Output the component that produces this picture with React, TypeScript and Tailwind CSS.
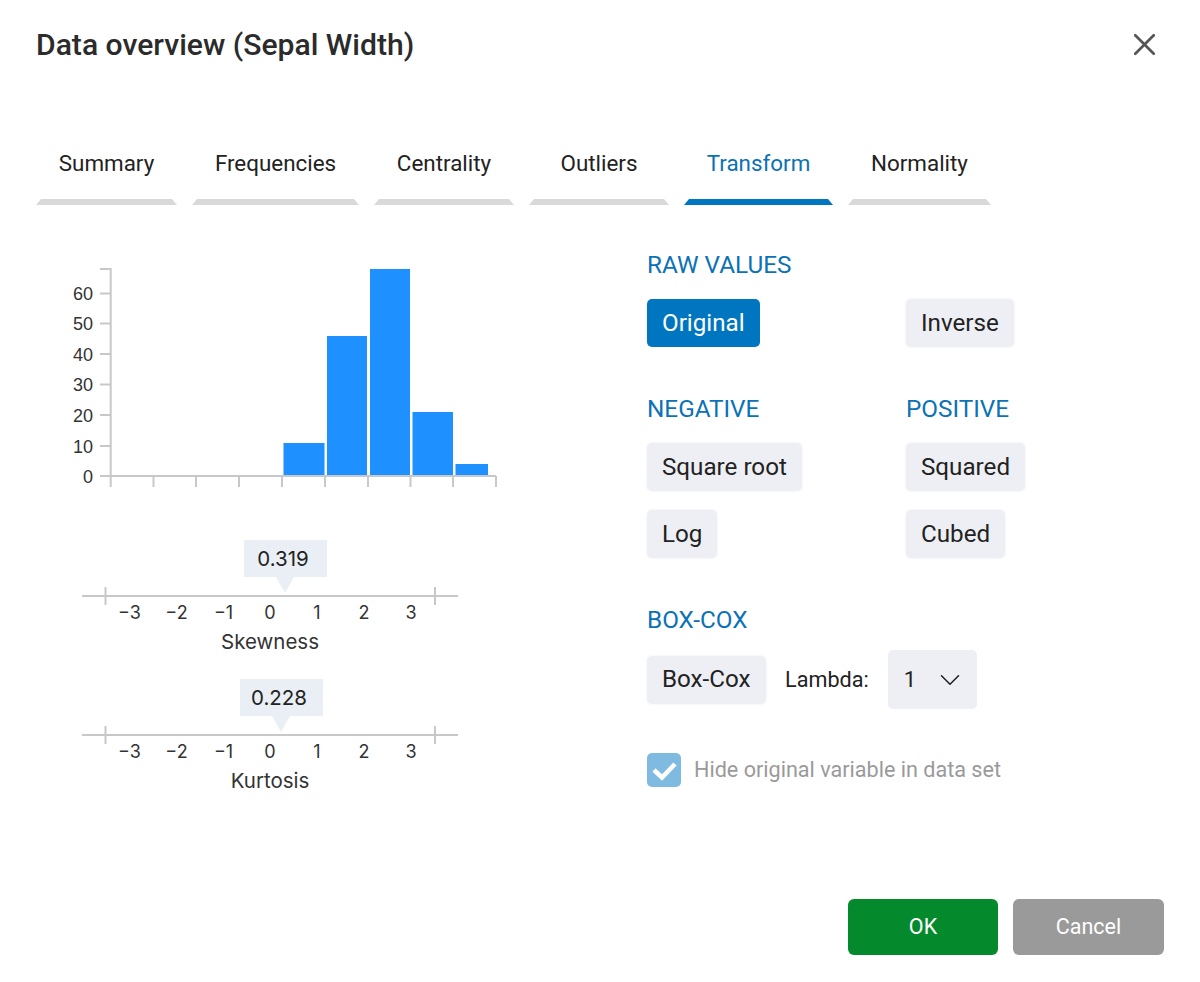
import { ChevronDown, X } from 'lucide-react';

const font = 'font-["Roboto",sans-serif]';

const tabs = [
  { label: 'Summary', width: 'w-[141px]' },
  { label: 'Frequencies', width: 'w-[167px]' },
  { label: 'Centrality', width: 'w-[140px]' },
  { label: 'Outliers', width: 'w-[140px]' },
  { label: 'Transform', width: 'w-[149px]', active: true },
  { label: 'Normality', width: 'w-[143px]' },
];

const bars = [
  { x: 223.5, w: 41, top: 183 },
  { x: 267, w: 40, top: 76 },
  { x: 310, w: 40, top: 9 },
  { x: 352.5, w: 40.5, top: 152 },
  { x: 395.5, w: 32.5, top: 204 },
];

function Histogram() {
  const yTicks = [
    { label: '60', y: 33.5 },
    { label: '50', y: 63.5 },
    { label: '40', y: 94 },
    { label: '30', y: 124.5 },
    { label: '20', y: 155 },
    { label: '10', y: 186 },
    { label: '0', y: 216 },
  ];
  const xTicks = [50.7, 93.5, 136, 179, 222, 265, 308, 350.5, 393, 436];

  return (
    <svg width="460" height="240" className="block" fontFamily="Liberation Sans, sans-serif">
      {bars.map((b) => (
        <rect key={b.x} x={b.x} y={b.top} width={b.w} height={216 - b.top} fill="#1e90ff" />
      ))}
      <g stroke="#c8c8c8" strokeWidth="2" fill="none">
        <path d="M40 9H50.7V216" />
        <path d="M40 216H436" />
        {yTicks.map((t) => (
          <path key={t.y} d={`M40 ${t.y}H50`} />
        ))}
        {xTicks.map((x) => (
          <path key={x} d={`M${x} 216V227`} />
        ))}
      </g>
      {yTicks.map((t) => (
        <text key={t.label} x="33" y={t.y + 6.5} textAnchor="end" fontSize="18" fill="#333">
          {t.label}
        </text>
      ))}
    </svg>
  );
}

function Gauge({ label, value, tipLeft }: { label: string; value: string; tipLeft: string }) {
  const ticks = [
    { t: '−3', x: 69.5 },
    { t: '−2', x: 116.5 },
    { t: '−1', x: 163.5 },
    { t: '0', x: 210 },
    { t: '1', x: 257 },
    { t: '2', x: 304 },
    { t: '3', x: 351 },
  ];

  return (
    <div className="relative h-[115px] w-[460px]">
      <svg width="460" height="115" className="block" fontFamily="Inter, sans-serif">
        <g stroke="#c8c8c8" strokeWidth="2" fill="none">
          <path d="M22 57H398" />
          <path d="M45.5 48V66" />
          <path d="M375 48V66" />
        </g>
        {ticks.map((k) => (
          <text key={k.t} x={k.x} y="80" textAnchor="middle" fontSize="18" fill="#333">
            {k.t}
          </text>
        ))}
        <text x="210" y="110" textAnchor="middle" fontSize="20.5" fill="#333">
          {label}
        </text>
      </svg>
      <div className={`absolute top-[1px] flex h-[37px] w-[83px] items-center justify-center bg-[#e9eff4] pr-[5px] pt-[1px] font-["Inter",sans-serif] text-[20.5px] text-[#222] ${tipLeft}`}>
        {value}
        <span className="absolute left-[32px] top-[37px] h-0 w-0 border-x-[9px] border-t-[16px] border-x-transparent border-t-[#e9eff4]" />
      </div>
    </div>
  );
}

function OptionButton({ children, active }: { children: string; active?: boolean }) {
  return (
    <button
      className={`h-[48px] rounded-[5px] px-[15px] text-[24.2px] ${
        active ? 'bg-[#0076c0] text-white' : 'bg-[#eeeff4] text-[#222] shadow-[0_0_3px_#eeeff4]'
      }`}
    >
      {children}
    </button>
  );
}

function Heading({ children }: { children: string }) {
  return <h3 className="h-[28px] text-[24.3px] leading-[28px] text-[#0a72b5]">{children}</h3>;
}

export default function App() {
  return (
    <div className={`flex h-[982px] w-[1200px] flex-col overflow-hidden bg-white ${font}`}>
      <header className="flex h-[88px] items-center justify-between pl-[36px] pr-[37px] pt-[1px]">
        <h1 className="text-[30.1px] font-medium text-[#2b2b2b]">Data overview (Sepal Width)</h1>
        <X className="h-[37px] w-[37px] text-[#555]" strokeWidth={1.7} />
      </header>

      <nav className="ml-[36px] mt-[54px] flex gap-[15px]">
        {tabs.map((t) => (
          <div key={t.label} className={`${t.width} flex flex-col`}>
            <span className={`h-[44px] text-center text-[22.4px] leading-[42px] ${t.active ? 'text-[#0a72b5]' : 'text-[#222]'}`}>
              {t.label}
            </span>
            <span className={`mt-[13px] h-0 border-x-[5px] border-b-[6px] border-x-transparent ${t.active ? 'border-b-[#0076c0]' : 'border-b-[#d9d9d9]'}`} />
          </div>
        ))}
      </nav>

      <main className="flex flex-1">
        <section className="ml-[60px] mt-[55px] w-[587px]">
          <Histogram />
          <div className="mt-[39px] flex flex-col gap-[24px]">
            <Gauge label="Skewness" value="0.319" tipLeft="left-[184px]" />
            <Gauge label="Kurtosis" value="0.228" tipLeft="left-[180px]" />
          </div>
        </section>

        <section className="mt-[46px] grid grid-cols-[259px_1fr] content-start justify-items-start">
          <div className="col-span-2">
            <Heading>RAW VALUES</Heading>
          </div>
          <div className="mt-[20px]">
            <OptionButton active>Original</OptionButton>
          </div>
          <div className="mt-[20px]">
            <OptionButton>Inverse</OptionButton>
          </div>

          <div className="mt-[48px]">
            <Heading>NEGATIVE</Heading>
          </div>
          <div className="mt-[48px]">
            <Heading>POSITIVE</Heading>
          </div>
          <div className="mt-[20px]">
            <OptionButton>Square root</OptionButton>
          </div>
          <div className="mt-[20px]">
            <OptionButton>Squared</OptionButton>
          </div>
          <div className="mt-[19px]">
            <OptionButton>Log</OptionButton>
          </div>
          <div className="mt-[19px]">
            <OptionButton>Cubed</OptionButton>
          </div>

          <div className="col-span-2 mt-[48px]">
            <Heading>BOX-COX</Heading>
          </div>
          <div className="col-span-2 mt-[16px] flex items-center">
            <OptionButton>Box-Cox</OptionButton>
            <span className="ml-[19.5px] pt-[1px] text-[21.6px] text-[#222]">Lambda:</span>
            <div className="ml-[19px] flex h-[59px] w-[89px] items-center justify-between rounded-[5px] bg-[#eeeff4] pl-[16px] pr-[10px] text-[22px] text-[#222]">
              1
              <ChevronDown className="h-[34px] w-[34px] text-[#222]" strokeWidth={1.1} />
            </div>
          </div>

          <label className="col-span-2 mt-[44px] flex items-center">
            <span className="flex h-[34px] w-[34px] items-center justify-center rounded-[5px] bg-[#7fbbe0]">
              <svg width="34" height="34" fill="none" stroke="white" strokeWidth="4.5">
                <path d="M7 17L15 24.5L28 11" />
              </svg>
            </span>
            <span className="ml-[13px] text-[21.6px] text-[#9a9a9a]">Hide original variable in data set</span>
          </label>
        </section>
      </main>

      <footer className="mb-[27px] flex justify-end gap-[15px] pr-[36px]">
        <button className="h-[56px] w-[150px] rounded-[6px] bg-[#048a2c] pt-[1px] text-[21.5px] text-white">OK</button>
        <button className="h-[56px] w-[151px] rounded-[6px] bg-[#9a9a9a] pt-[1px] text-[21.5px] text-white">Cancel</button>
      </footer>
    </div>
  );
}
